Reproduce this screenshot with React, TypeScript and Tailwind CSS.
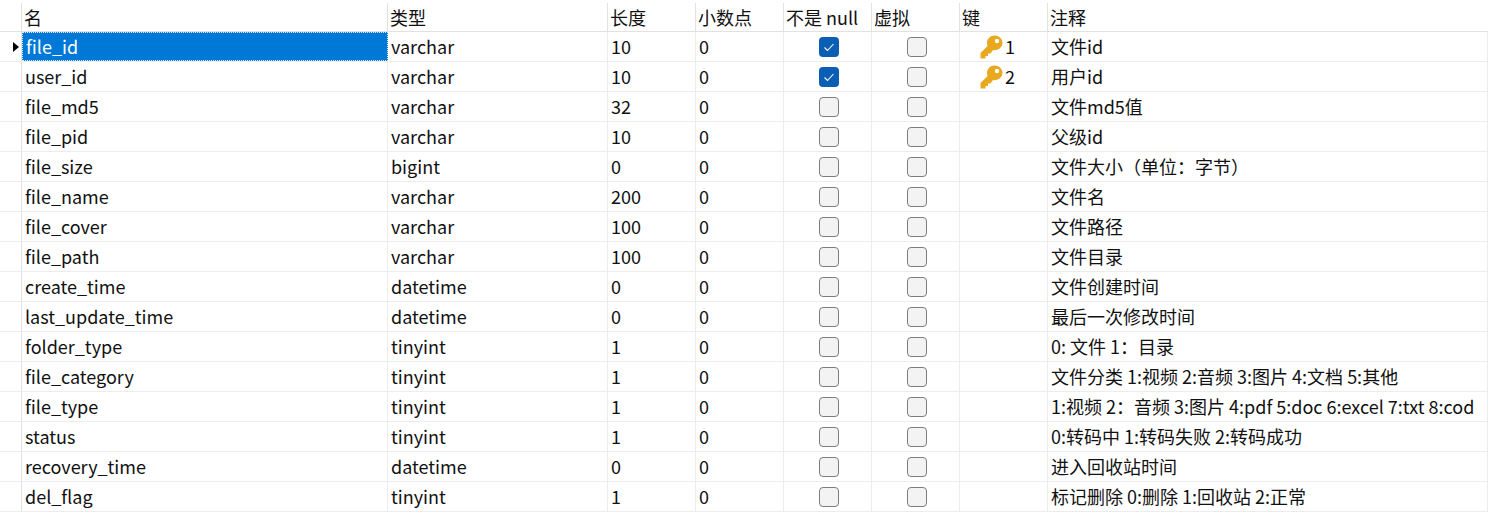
import React from "react";

const font = "[font-family:'Noto_Sans_CJK_SC','Noto_Sans',sans-serif]";

const columns = ["名", "类型", "长度", "小数点", "不是 null", "虚拟", "键", "注释"];
const widths = "grid-cols-[22px_366px_220px_88px_88px_88px_88px_88px_440px]";

type Row = [string, string, string, string, string];
const rows: Row[] = [
  ["file_id", "varchar", "10", "1", "文件id"],
  ["user_id", "varchar", "10", "2", "用户id"],
  ["file_md5", "varchar", "32", "", "文件md5值"],
  ["file_pid", "varchar", "10", "", "父级id"],
  ["file_size", "bigint", "0", "", "文件大小（单位：字节）"],
  ["file_name", "varchar", "200", "", "文件名"],
  ["file_cover", "varchar", "100", "", "文件路径"],
  ["file_path", "varchar", "100", "", "文件目录"],
  ["create_time", "datetime", "0", "", "文件创建时间"],
  ["last_update_time", "datetime", "0", "", "最后一次修改时间"],
  ["folder_type", "tinyint", "1", "", "0: 文件 1：目录"],
  ["file_category", "tinyint", "1", "", "文件分类 1:视频 2:音频 3:图片 4:文档 5:其他"],
  ["file_type", "tinyint", "1", "", "1:视频 2：音频 3:图片 4:pdf 5:doc 6:excel 7:txt 8:cod"],
  ["status", "tinyint", "1", "", "0:转码中 1:转码失败 2:转码成功"],
  ["recovery_time", "datetime", "0", "", "进入回收站时间"],
  ["del_flag", "tinyint", "1", "", "标记删除 0:删除 1:回收站 2:正常"],
];

function Key() {
  return (
    <svg width="23" height="24" viewBox="0 0 23 24">
      <path
        d="M14.5 0.5 C10.2 0.5 7 3.7 7 8 C7 9.1 7.2 10 7.6 10.9 L0.5 18 V23.5 H5.5 V21 H8 V18.5 H10.5 L13 14.9 C13.5 15 14 15.2 14.5 15.2 C18.8 15.2 22.5 12 22.5 7.8 C22.5 3.7 18.8 0.5 14.5 0.5 Z"
        fill="#e9a91f"
      />
      <circle cx="17" cy="6" r="2.2" fill="#fff" />
    </svg>
  );
}

function Box({ on }: { on?: boolean }) {
  return on ? (
    <span className="flex h-[20px] w-[20px] items-center justify-center rounded-[4px] bg-[#0a5fb5]">
      <svg width="12" height="12" viewBox="0 0 12 12" fill="none">
        <path d="M1.5 6.5 L4.5 9.5 L10.5 3" stroke="#fff" strokeWidth="1.1" />
      </svg>
    </span>
  ) : (
    <span className="h-[20px] w-[20px] rounded-[4px] border border-[#7c7c7c] bg-[#f3f3f3]" />
  );
}

const cell = "flex h-full items-center border-r border-[#ececec] pl-[3px] whitespace-nowrap overflow-hidden";

export default function App() {
  return (
    <div className={`flex h-[517px] w-[1510px] overflow-hidden bg-white text-[18px] text-[#111] ${font}`}>
      <div className="w-[1488px] pt-[3px]">
        <div className={`grid h-[29px] ${widths} border-b border-[#e2e2e2]`}>
          <span className="border-r border-[#e2e2e2]" />
          {columns.map((c, i) => (
            <span key={c} className={`flex items-center whitespace-nowrap border-[#e2e2e2] pl-[2px] leading-none ${i === 7 ? "" : "border-r"}`}>{c}</span>
          ))}
        </div>
        {rows.map((r, i) => (
          <div key={r[0]} className={`grid h-[30px] ${widths} items-center border-b border-[#ececec]`}>
            <span className="flex h-full items-center justify-end border-r border-[#e2e2e2] pr-[2px]">
              {i === 0 && <span className="h-0 w-0 border-y-[5px] border-l-[6px] border-y-transparent border-l-black" />}
            </span>
            <span className={`${cell} ${i === 0 ? "border-[1px] border-dotted border-[#9cc4ea] bg-[#0078d7] pl-[2px] text-white" : ""}`}>{r[0]}</span>
            <span className={cell}>{r[1]}</span>
            <span className={cell}>{r[2]}</span>
            <span className={cell}>0</span>
            <span className={`${cell} justify-center pl-0`}><Box on={i < 2} /></span>
            <span className={`${cell} justify-center pl-0`}><Box /></span>
            <span className={`${cell} pl-[20px]`}>
              {r[3] && <Key />}
              {r[3] && <span className="ml-[2px]">{r[3]}</span>}
            </span>
            <span className={`${cell} w-[440px]`}>{r[4]}</span>
          </div>
        ))}
      </div>
    </div>
  );
}
